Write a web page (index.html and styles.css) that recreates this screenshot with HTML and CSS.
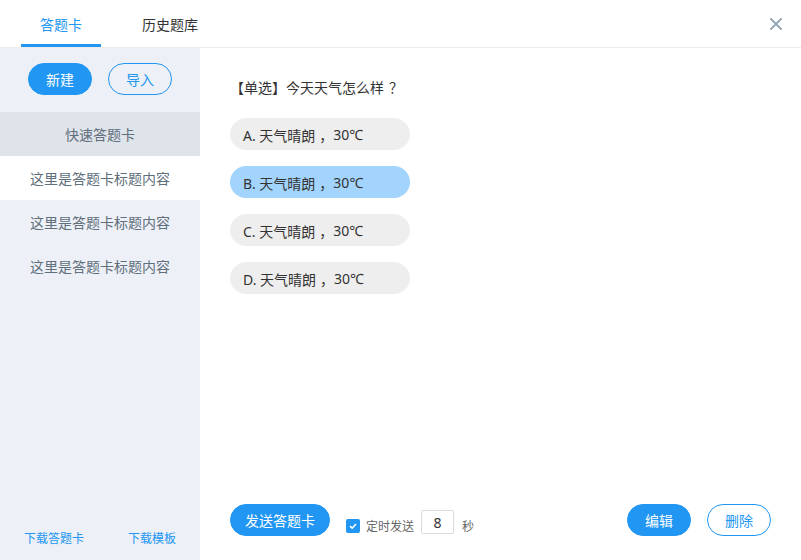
FILE: index.html
```html
<!DOCTYPE html>
<html lang="zh">
<head>
<meta charset="utf-8">
<title>答题卡</title>
<link rel="stylesheet" href="styles.css">
</head>
<body>
<div class="app">
  <header class="header">
    <nav class="tabs">
      <div class="tab active">答题卡</div>
      <div class="tab">历史题库</div>
    </nav>
    <button class="close" aria-label="关闭">
      <svg width="12" height="12" viewBox="0 0 12 12"><path d="M1 1L11 11M11 1L1 11" stroke="#9aa9b4" stroke-width="2" stroke-linecap="square"/></svg>
    </button>
  </header>
  <div class="body">
    <aside class="sidebar">
      <div class="side-actions">
        <button class="btn btn-primary">新建</button>
        <button class="btn btn-outline">导入</button>
      </div>
      <ul class="side-list">
        <li class="side-item quick">快速答题卡</li>
        <li class="side-item selected">这里是答题卡标题内容</li>
        <li class="side-item">这里是答题卡标题内容</li>
        <li class="side-item">这里是答题卡标题内容</li>
      </ul>
      <div class="side-footer">
        <a class="link">下载答题卡</a>
        <a class="link">下载模板</a>
      </div>
    </aside>
    <main class="main">
      <div class="question">【单选】今天天气怎么样<span class="qmark">？</span></div>
      <div class="options">
        <div class="option">A. 天气晴朗<span class="comma">，</span>30℃</div>
        <div class="option chosen">B. 天气晴朗<span class="comma">，</span>30℃</div>
        <div class="option">C. 天气晴朗<span class="comma">，</span>30℃</div>
        <div class="option">D. 天气晴朗<span class="comma">，</span>30℃</div>
      </div>
      <div class="bar">
        <button class="btn btn-primary btn-wide">发送答题卡</button>
        <div class="timer">
          <span class="check"><svg width="10" height="10" viewBox="0 0 10 10"><path d="M2 5.2L4.2 7.2L8 3" stroke="#fff" stroke-width="1.6" fill="none"/></svg></span>
          <span class="timer-label">定时发送</span>
          <span class="timer-input">8</span>
          <span class="timer-label sec">秒</span>
        </div>
        <div class="spacer"></div>
        <button class="btn btn-primary">编辑</button>
        <button class="btn btn-outline">删除</button>
      </div>
    </main>
  </div>
</div>
</body>
</html>
```
FILE: styles.css
```css
* { box-sizing: border-box; }
html, body { margin: 0; padding: 0; }
body {
  font-family: "Noto Sans", "Noto Sans CJK SC", sans-serif;
  color: #333;
  background: #fff;
}
.app {
  width: 801px;
  height: 560px;
  display: flex;
  flex-direction: column;
  overflow: hidden;
}
.header {
  height: 48px;
  border-bottom: 1px solid #ececec;
  display: flex;
  align-items: stretch;
  justify-content: space-between;
  padding: 0 15px 0 21px;
}
.tabs { display: flex; gap: 29px; }
.tab {
  width: 80px;
  display: flex;
  align-items: center;
  justify-content: center;
  font-size: 14px;
  color: #333;
  border-bottom: 3px solid transparent;
  padding-top: 4px;
}
.tab.active { color: #2196f3; border-bottom-color: #2196f3; }
.close {
  border: 0;
  background: none;
  padding: 0;
  width: 20px;
  display: flex;
  align-items: center;
  justify-content: center;
}
.body { flex: 1; display: flex; min-height: 0; }
.sidebar {
  width: 200px;
  background: #edf0f7;
  display: flex;
  flex-direction: column;
  padding-top: 15px;
}
.side-actions {
  display: flex;
  justify-content: center;
  gap: 16px;
  margin-bottom: 17px;
}
.btn {
  height: 32px;
  width: 64px;
  border-radius: 16px;
  font-family: inherit;
  font-size: 14px;
  padding: 0;
  cursor: pointer;
}
.btn-primary { background: #2196f3; border: 1px solid #2196f3; color: #fff; }
.btn-outline { background: #fff; border: 1px solid #2196f3; color: #2196f3; }
.sidebar .btn-outline { background: transparent; }
.btn-wide { width: 100px; }
.side-list { list-style: none; margin: 0; padding: 0; }
.side-item {
  height: 44px;
  display: flex;
  align-items: center;
  justify-content: center;
  font-size: 14px;
  color: #5f6f7c;
}
.side-item.quick { background: #dfe3ea; }
.side-item.selected { background: #fff; }
.side-footer {
  margin-top: auto;
  display: flex;
  justify-content: space-between;
  padding: 0 24px 12px;
}
.link { font-size: 12px; color: #2196f3; line-height: 18px; }
.main {
  flex: 1;
  display: flex;
  flex-direction: column;
  padding: 30px 30px 24px;
}
.question { font-size: 14px; line-height: 20px; color: #333; }
.qmark { padding-left: 5px; }
.comma { padding-left: 4px; }
.options {
  display: flex;
  flex-direction: column;
  gap: 16px;
  margin-top: 20px;
}
.option {
  width: 180px;
  height: 32px;
  border-radius: 16px;
  background: #eeeeee;
  font-size: 14px;
  display: flex;
  align-items: center;
  padding: 1px 0 0 13px;
  color: #333;
  white-space: pre;
}
.option.chosen { background: #a3d4fd; }
.bar {
  margin-top: auto;
  display: flex;
  align-items: flex-end;
}
.timer {
  display: flex;
  align-items: center;
  margin-left: 16px;
  margin-bottom: 1px;
}
.check {
  width: 14px;
  height: 14px;
  border-radius: 2px;
  background: #2196f3;
  display: flex;
  align-items: center;
  justify-content: center;
  margin-top: 8px;
}
.timer-label { font-size: 12px; color: #666; margin-left: 6px; margin-top: 8px; }
.timer-label.sec { margin-left: 8px; }
.timer-input {
  width: 33px;
  height: 24px;
  border: 1px solid #dcdcdc;
  border-radius: 2px;
  margin-left: 7px;
  display: flex;
  align-items: center;
  justify-content: center;
  font-size: 14px;
  color: #333;
}
.spacer { flex: 1; }
.bar .btn-outline { margin-left: 16px; }
```
